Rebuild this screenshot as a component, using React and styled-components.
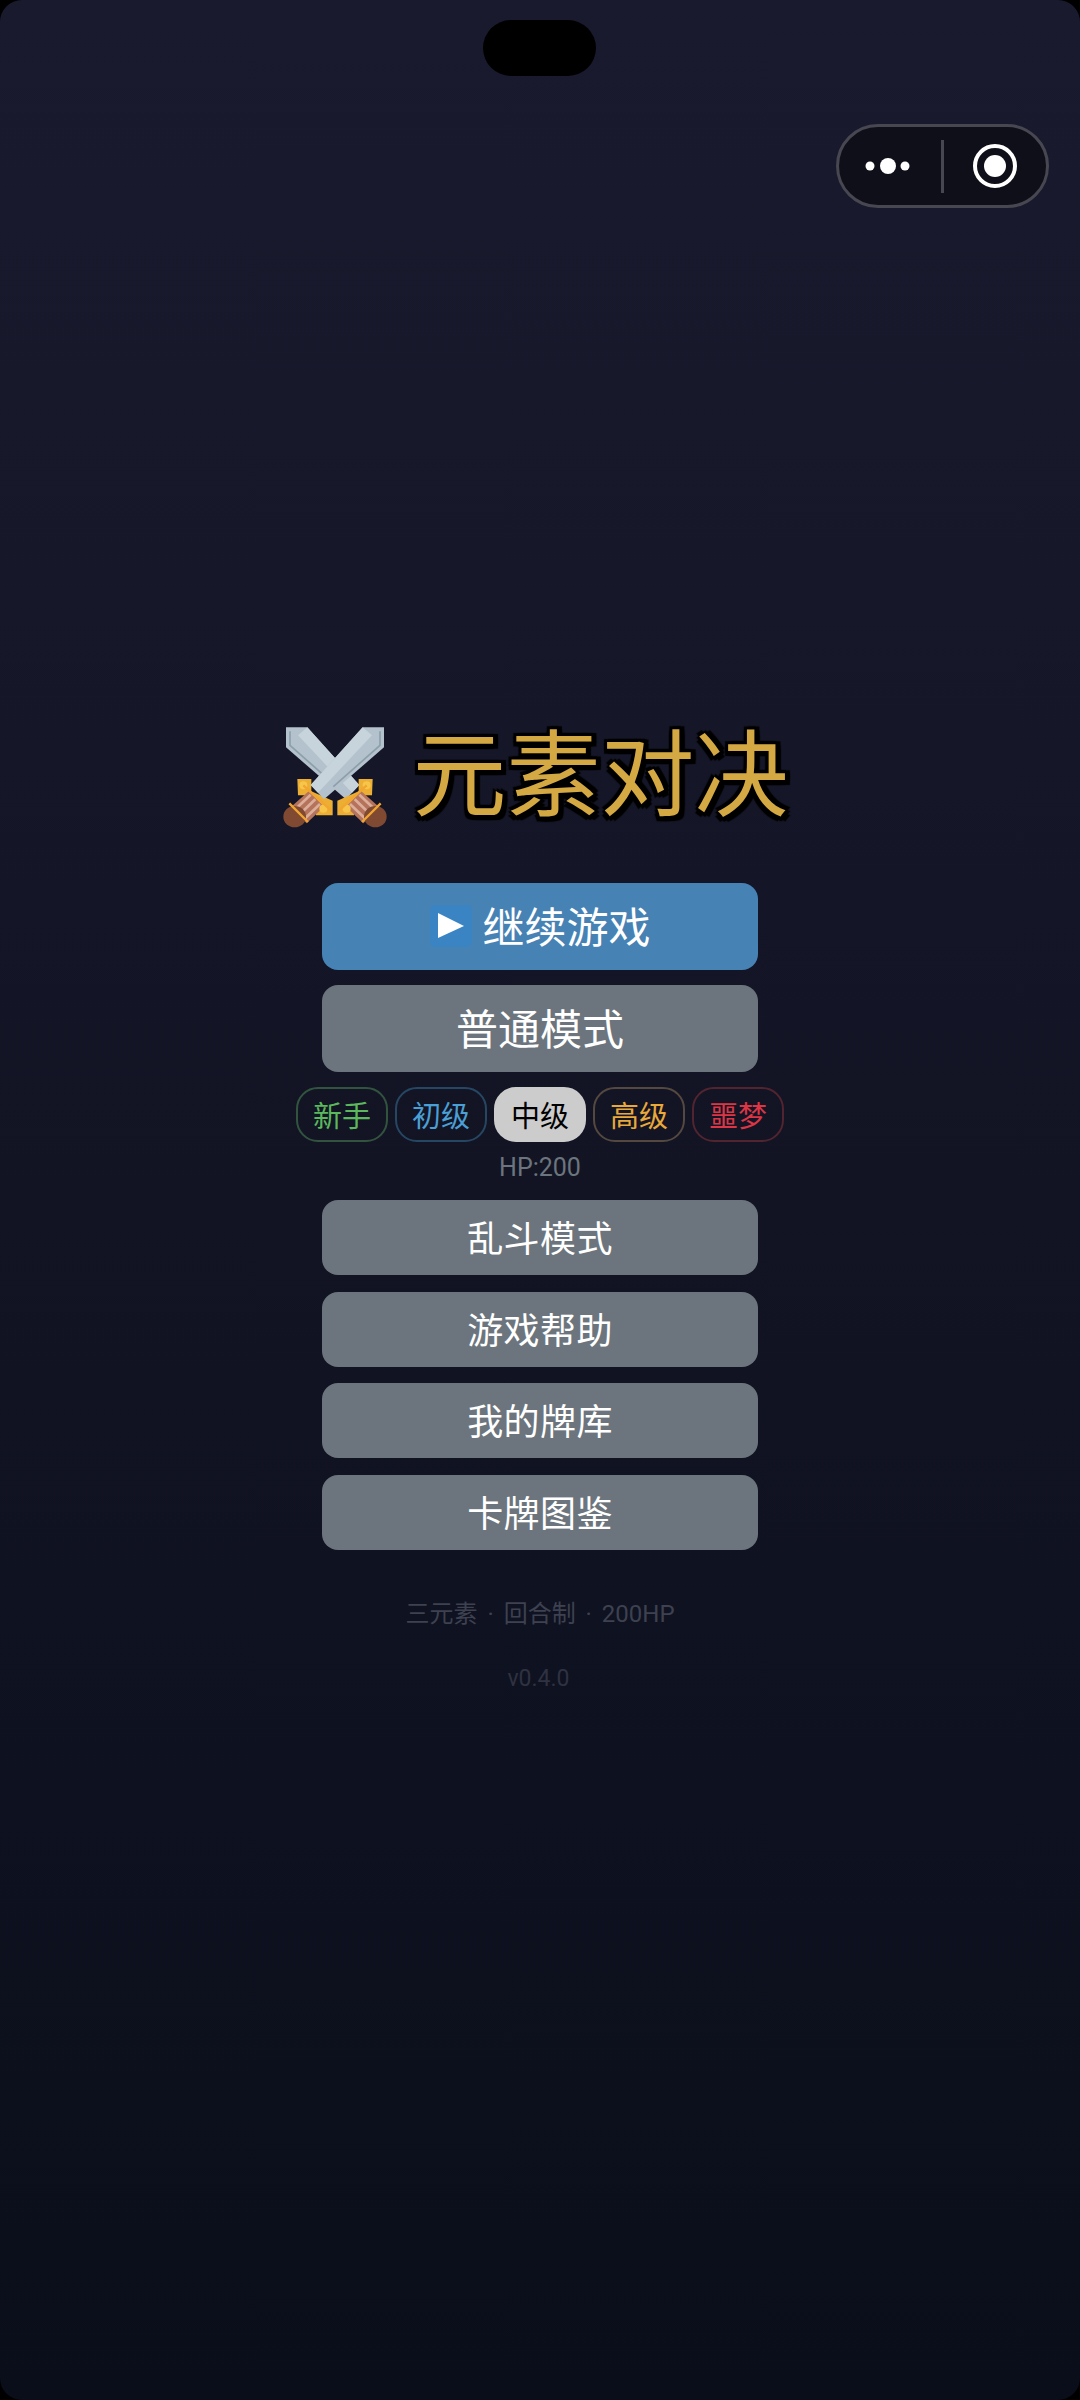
import styled, { createGlobalStyle } from 'styled-components';

const GlobalStyle = createGlobalStyle`
  html, body {
    margin: 0;
    padding: 0;
    background: #000;
  }
`;

const Screen = styled.div`
  position: relative;
  box-sizing: border-box;
  width: 1080px;
  height: 2400px;
  padding-top: 716px;
  border-radius: 22px;
  overflow: hidden;
  display: flex;
  flex-direction: column;
  align-items: center;
  background: linear-gradient(180deg, #1a1a2e 0%, #0a0e1a 100%);
  font-family: Roboto, 'Noto Sans CJK SC', sans-serif;
`;

const Notch = styled.div`
  position: absolute;
  top: 20px;
  left: 483px;
  width: 113px;
  height: 56px;
  border-radius: 28px;
  background: #000;
`;

const Capsule = styled.div`
  position: absolute;
  top: 124px;
  left: 836px;
  box-sizing: border-box;
  width: 213px;
  height: 84px;
  border: 3px solid #474751;
  border-radius: 42px;
  background: #0f0f19;
  display: flex;
  align-items: center;
`;

const CapsuleSlot = styled.div`
  box-sizing: border-box;
  width: 102px;
  display: flex;
  justify-content: center;
  padding-right: ${(p) => p.$nudge || 0}px;
`;

const CapsuleDivider = styled.div`
  width: 3px;
  height: 53px;
  background: #474751;
`;

const Title = styled.h1`
  margin: 0 21px 0 0;
  display: flex;
  align-items: center;
  gap: 12px;
  height: 118px;
  font-size: 94px;
  line-height: 118px;
  font-weight: 400;
  color: #d4a843;
  text-shadow: 5px 5px 1px #000, -3px -3px 1px #000, 5px -3px 1px #000, -3px 5px 1px #000,
    1px 5px 1px #000, 5px 1px 1px #000, -3px 1px 1px #000, 1px -3px 1px #000;
`;

const TitleText = styled.span`
  padding-top: 4px;
`;

const Menu = styled.div`
  width: 436px;
  margin-top: 49px;
  display: flex;
  flex-direction: column;
  align-items: center;
`;

const MenuButton = styled.button`
  box-sizing: border-box;
  width: 100%;
  height: ${(p) => (p.$large ? 86.5 : 75)}px;
  margin-bottom: ${(p) => (p.$large ? 15.5 : 16.5)}px;
  padding: 0 0 3px;
  border: none;
  border-radius: 16px;
  display: flex;
  align-items: center;
  justify-content: center;
  gap: 10px;
  background: ${(p) => (p.$primary ? '#4682b4' : '#6c757d')};
  color: #fff;
  font-family: inherit;
  font-size: ${(p) => (p.$large ? 42 : 36)}px;
  letter-spacing: ${(p) => (p.$large ? 0 : 0.4)}px;
`;

const PlayBadge = styled.svg`
  width: 42px;
  height: 42px;
  margin: 3px 0 0 1px;
`;

const DifficultyRow = styled.div`
  display: flex;
  gap: 7px;
`;

const Chip = styled.div`
  box-sizing: border-box;
  width: 92px;
  height: 55px;
  padding-bottom: 2px;
  border: 2px solid ${(p) => (p.$active ? '#cccccc' : p.$border)};
  border-radius: 22px;
  display: flex;
  align-items: center;
  justify-content: center;
  background: ${(p) => (p.$active ? '#cccccc' : 'transparent')};
  color: ${(p) => (p.$active ? '#000' : p.$color)};
  font-size: 29px;
`;

const HpHint = styled.div`
  height: 34px;
  margin: 9px 0 15px;
  color: #6c757d;
  font-size: 25px;
  line-height: 34px;
`;

const Footer = styled.div`
  margin-top: 30px;
  color: #3d4150;
  font-size: 24px;
  line-height: 36px;
  word-spacing: 4px;
`;

const Version = styled.div`
  margin-top: 29px;
  margin-left: -3px;
  color: #2e3241;
  font-size: 23px;
  line-height: 36px;
`;

const levels = [
  { label: '新手', color: '#5cb85c', border: '#32543f' },
  { label: '初级', color: '#4a9fd4', border: '#264763' },
  { label: '中级', active: true },
  { label: '高级', color: '#e8a93a', border: '#54483f' },
  { label: '噩梦', color: '#dc3545', border: '#52242f' },
];

function DotsIcon() {
  return (
    <svg width="46" height="20" viewBox="0 0 46 20">
      <circle cx="5" cy="10" r="4.5" fill="#fff" />
      <circle cx="23" cy="10" r="8" fill="#fff" />
      <circle cx="40" cy="10" r="4.5" fill="#fff" />
    </svg>
  );
}

function TargetIcon() {
  return (
    <svg width="46" height="46" viewBox="0 0 46 46">
      <circle cx="23" cy="23" r="20" fill="none" stroke="#fff" strokeWidth="4" />
      <circle cx="23" cy="23" r="11" fill="#fff" />
    </svg>
  );
}

function PlayIcon() {
  return (
    <PlayBadge viewBox="0 0 42 42">
      <rect width="42" height="42" rx="5" fill="#3b84c4" />
      <path d="M8 8 L34 21 L8 33 Z" fill="#fff" />
    </PlayBadge>
  );
}

function Sword({ flip }) {
  return (
    <g transform={flip ? 'matrix(-1 0 0 1 390 0)' : undefined}>
      <path d="M82 207 H124 V244 L188 272 V316 H138 V284 L106 256 H84 Z" fill="#ecae33" />
      <path d="M62 292 L116 244 L162 290 L110 340 Z" fill="#b5735c" />
      <path d="M76 298 L122 254 M90 312 L136 268 M104 326 L150 282" stroke="#dcae9a" strokeWidth="8" />
      <ellipse cx="74" cy="320" rx="34" ry="32" fill="#7f4a31" />
      <circle cx="100" cy="226" r="12" fill="#f6c549" />
      <circle cx="160" cy="296" r="12" fill="#f6c549" />
      <path d="M58 280 L114 336 M184 302 L100 226" stroke="#f2a531" strokeWidth="7" />
      <path d="M48 52 H112 L268 225 L228 268 L48 112 Z" fill="#b3c2cc" />
      <path d="M60 64 V106 L200 230" fill="none" stroke="#8e9fab" strokeWidth="5" />
      <path d="M112 52 L268 225 L246 248 L84 76 Z" fill="#c7d4dc" />
    </g>
  );
}

function SwordsIcon() {
  return (
    <svg width="130" height="130" viewBox="0 0 390 390">
      <Sword />
      <Sword flip />
    </svg>
  );
}

export default function App() {
  return (
    <>
      <GlobalStyle />
      <Screen>
        <Notch />
        <Capsule>
          <CapsuleSlot $nudge={5}>
            <DotsIcon />
          </CapsuleSlot>
          <CapsuleDivider />
          <CapsuleSlot>
            <TargetIcon />
          </CapsuleSlot>
        </Capsule>
        <Title>
          <SwordsIcon />
          <TitleText>元素对决</TitleText>
        </Title>
        <Menu>
          <MenuButton $primary $large>
            <PlayIcon />
            继续游戏
          </MenuButton>
          <MenuButton $large>普通模式</MenuButton>
          <DifficultyRow>
            {levels.map((level) => (
              <Chip key={level.label} $active={level.active} $color={level.color} $border={level.border}>
                {level.label}
              </Chip>
            ))}
          </DifficultyRow>
          <HpHint>HP:200</HpHint>
          <MenuButton>乱斗模式</MenuButton>
          <MenuButton>游戏帮助</MenuButton>
          <MenuButton>我的牌库</MenuButton>
          <MenuButton>卡牌图鉴</MenuButton>
        </Menu>
        <Footer>三元素 · 回合制 · 200HP</Footer>
        <Version>v0.4.0</Version>
      </Screen>
    </>
  );
}
